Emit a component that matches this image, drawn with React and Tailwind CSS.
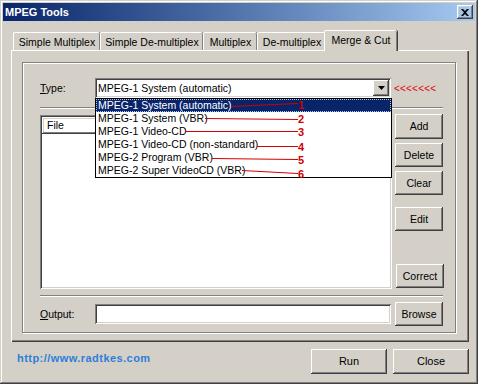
import React from "react";

const raised =
  "shadow-[inset_-1px_-1px_#404040,inset_1px_1px_#ffffff,inset_-2px_-2px_#808080,inset_2px_2px_#d4d0c8]";
const sunken =
  "shadow-[inset_1px_1px_#808080,inset_-1px_-1px_#ffffff,inset_2px_2px_#404040,inset_-2px_-2px_#d4d0c8]";

function Btn({ children, className = "" }) {
  return (
    <div
      className={`flex items-center justify-center bg-[#d4d0c8] text-black ${raised} ${className}`}
    >
      {children}
    </div>
  );
}

function Tab({ label, w, selected }) {
  if (selected) {
    return (
      <div
        className={`relative z-10 -ml-[2px] -mb-[1px] flex h-[21px] items-start justify-center rounded-t-[2px] border-l border-t border-white bg-[#d4d0c8] pt-[3px] shadow-[inset_-1px_0_#808080,1px_0_#404040] ${w}`}
      >
        {label}
      </div>
    );
  }
  return (
    <div
      className={`flex h-[18px] items-start justify-center rounded-t-[2px] border-l border-t border-white bg-[#d4d0c8] pt-[3px] shadow-[inset_-1px_0_#808080,1px_0_#404040] ${w}`}
    >
      {label}
    </div>
  );
}

const items = [
  "MPEG-1 System (automatic)",
  "MPEG-1 System (VBR)",
  "MPEG-1 Video-CD",
  "MPEG-1 Video-CD (non-standard)",
  "MPEG-2 Program (VBR)",
  "MPEG-2 Super VideoCD (VBR)",
];

export default function App() {
  return (
    <div
      className="relative h-[384px] w-[478px] overflow-hidden bg-[#d4d0c8] p-[3px] text-[10.5px] leading-[13px] text-black shadow-[inset_-1px_-1px_#404040,inset_1px_1px_#d4d0c8,inset_-2px_-2px_#808080,inset_2px_2px_#ffffff]"
      style={{ fontFamily: '"Liberation Sans", Arial, sans-serif' }}
    >
      {/* Title bar */}
      <div className="flex h-[18px] items-center justify-between bg-gradient-to-r from-[#0a246a] to-[#a6caf0] pl-[2px] pr-[2px]">
        <span className="text-[11px] font-bold text-white">MPEG Tools</span>
        <div
          className={`flex h-[14px] w-[16px] items-center justify-center ${raised}`}
        >
          <svg width="8" height="7" viewBox="0 0 8 7">
            <path
              d="M0 0h2l2 2 2-2h2L5 3.5 8 7H6L4 5 2 7H0l3-3.5z"
              fill="#000"
            />
          </svg>
        </div>
      </div>

      {/* Tabs */}
      <div className="ml-[8px] mt-[7px] flex h-[22px] items-end pl-[2px]">
        <Tab label="Simple Multiplex" w="w-[87px]" />
        <Tab label="Simple De-multiplex" w="w-[103px]" />
        <Tab label="Multiplex" w="w-[54px]" />
        <Tab label="De-multiplex" w="w-[69px]" />
        <Tab label="Merge & Cut" w="w-[73px]" selected />
      </div>

      {/* Panel */}
      <div className="ml-[8px] h-[292px] w-[458px] border-l border-t border-white pl-[10px] pt-[11px] shadow-[inset_-1px_-1px_#404040,inset_-2px_-2px_#808080]">
        {/* Group box */}
        <div className="relative h-[271px] w-[434px] border border-[#808080] shadow-[inset_1px_1px_#ffffff,1px_1px_#ffffff] pl-[17px] pr-[11px] pt-[15px]">
          {/* Type row */}
          <div className="flex h-[20px] items-center">
            <span className="w-[55px]">
              <span className="underline">T</span>ype:
            </span>
            <div className="relative">
              <div
                className={`flex h-[20px] w-[296px] items-center bg-white pl-[3px] ${sunken}`}
              >
                <span className="flex-1">MPEG-1 System (automatic)</span>
                <Btn className="mr-[2px] h-[16px] w-[16px]">
                  <svg width="7" height="4" viewBox="0 0 7 4">
                    <path d="M0 0h7L3.5 4z" fill="#000" />
                  </svg>
                </Btn>
              </div>
              {/* Dropdown list */}
              <div className="absolute left-0 top-[20px] z-20 h-[80px] w-[297px] border border-black bg-white">
                {items.map((t, i) => (
                  <div
                    key={t}
                    className={`h-[13px] whitespace-nowrap pl-[2px] leading-[13px] ${
                      i === 0
                        ? "bg-[#0a246a] text-white outline-1 outline-dotted outline-[#a6caf0] -outline-offset-1"
                        : ""
                    }`}
                  >
                    {t}
                  </div>
                ))}
              </div>
            </div>
            <span className="ml-[3px] text-[10px] tracking-[0.2px] text-[#e00000]">
              &lt;&lt;&lt;&lt;&lt;&lt;&lt;
            </span>
          </div>

          {/* separator */}
          <div className="mt-[9px] h-[2px] w-[403px] border-t border-[#808080] border-b border-b-white" />

          {/* list + buttons */}
          <div className="mt-[5px] flex h-[176px]">
            <div className={`mt-[1px] h-[174px] w-[352px] bg-white p-[2px] ${sunken}`}>
              <div
                className={`flex h-[17px] w-[348px] items-center pl-[5px] ${raised}`}
              >
                File
              </div>
            </div>
            <div className="ml-[3px] flex flex-col">
              <Btn className="h-[25px] w-[48px]">Add</Btn>
              <Btn className="mt-[4px] h-[24px] w-[48px]">Delete</Btn>
              <Btn className="mt-[4px] h-[24px] w-[48px]">Clear</Btn>
              <Btn className="mt-[12px] h-[24px] w-[48px]">Edit</Btn>
              <Btn className="ml-[1px] mt-[33px] h-[24px] w-[48px]">Correct</Btn>
            </div>
          </div>

          {/* separator */}
          <div className="mt-[5px] h-[2px] w-[403px] border-t border-[#808080] border-b border-b-white" />

          {/* output row */}
          <div className="mt-[5px] flex h-[24px] items-center">
            <span className="w-[55px]">
              <span className="underline">O</span>utput:
            </span>
            <div className={`h-[20px] w-[296px] bg-white ${sunken}`} />
            <Btn className="ml-[4px] h-[24px] w-[48px]">Browse</Btn>
          </div>
        </div>
      </div>

      {/* Bottom row */}
      <div className="mt-[7px] flex h-[25px] items-center pl-[14px]">
        <span className="mb-[6px] flex-1 text-[11px] font-bold tracking-[0.45px] text-[#2c7fd8]">
          http://www.radtkes.com
        </span>
        <Btn className="h-[25px] w-[76px] text-[11px]">Run</Btn>
        <Btn className="ml-[6px] mr-[6px] h-[25px] w-[76px] text-[11px]">Close</Btn>
      </div>

      {/* red annotations */}
      <svg
        className="pointer-events-none absolute left-0 top-0 z-30"
        width="478"
        height="384"
      >
        <g stroke="#d00000" strokeWidth="1" fill="none">
          <line x1="231" y1="106.5" x2="298" y2="103.5" />
          <line x1="205" y1="118.5" x2="298" y2="119.5" />
          <line x1="185" y1="131.5" x2="298" y2="131.5" />
          <line x1="257" y1="146.5" x2="298" y2="146.5" />
          <line x1="212" y1="158.5" x2="298" y2="159.5" />
          <line x1="242" y1="170.5" x2="298" y2="173.5" />
        </g>
      </svg>
      {[
        ["1", 99],
        ["2", 113],
        ["3", 126],
        ["4", 141],
        ["5", 154],
        ["6", 168],
      ].map(([n, y]) => (
        <span
          key={n}
          className="absolute z-30 text-[11px] font-bold leading-[12px] text-[#d00000]"
          style={{ left: 298, top: y }}
        >
          {n}
        </span>
      ))}
    </div>
  );
}
